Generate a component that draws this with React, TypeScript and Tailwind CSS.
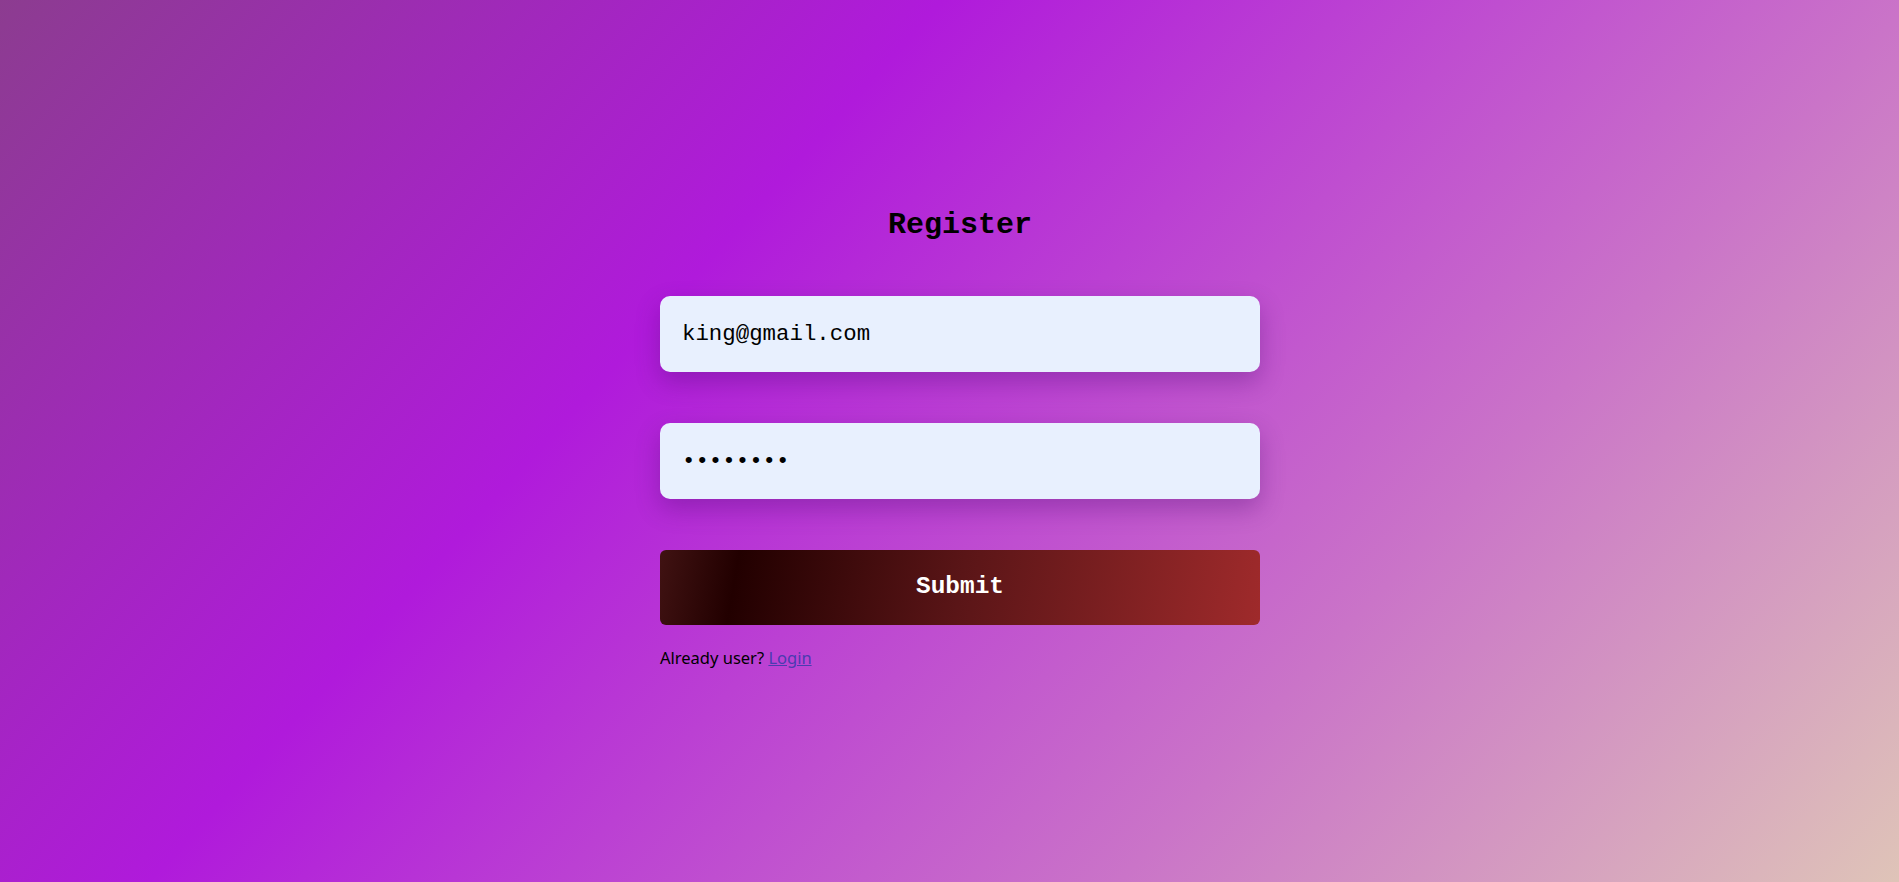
import { FC } from 'react';

const App: FC = () => {
  return (
    <main className="min-h-screen w-full bg-[linear-gradient(132deg,#8c3c90_0%,#b01adb_35%,#ca74c8_71%,#dfc4b8_100%)] flex justify-center pl-[21px]">
      <div className="w-[600px] pt-[207px] flex flex-col">
        {/* Title */}
        <h1 className="text-center text-[30px] leading-[36px] font-bold text-black font-['Liberation_Mono','Courier_New',monospace]">
          Register
        </h1>

        <form className="mt-[53px] flex flex-col" onSubmit={(e) => e.preventDefault()}>
          <input
            type="email"
            defaultValue="king@gmail.com"
            className="h-[76px] w-full rounded-[10px] bg-[#e8f0fe] px-[22px] text-[22.4px] text-black outline-none font-['Liberation_Mono','Courier_New',monospace] shadow-[0_10px_24px_rgba(70,10,110,0.32)]"
          />
          <input
            type="password"
            defaultValue="12345678"
            className="mt-[51px] h-[76px] w-full rounded-[10px] bg-[#e8f0fe] px-[22px] text-[22.4px] text-black outline-none font-['Liberation_Mono','Courier_New',monospace] shadow-[0_10px_24px_rgba(70,10,110,0.32)]"
          />
          <button
            type="submit"
            className="mt-[51px] h-[75px] w-full rounded-[6px] bg-[linear-gradient(100deg,#401212_0%,#220000_13%,#5a1517_50%,#9f2a2b_100%)] text-[24.4px] font-bold text-white font-['Liberation_Mono','Courier_New',monospace]"
          >
            Submit
          </button>
        </form>

        {/* Login link */}
        <p className="mt-[21px] text-[16.5px] leading-[24px] text-black font-['Noto_Sans',sans-serif]">
          Already user? <a href="#" className="text-[#4a3bb0] underline">Login</a>
        </p>
      </div>
    </main>
  );
};

export default App;
